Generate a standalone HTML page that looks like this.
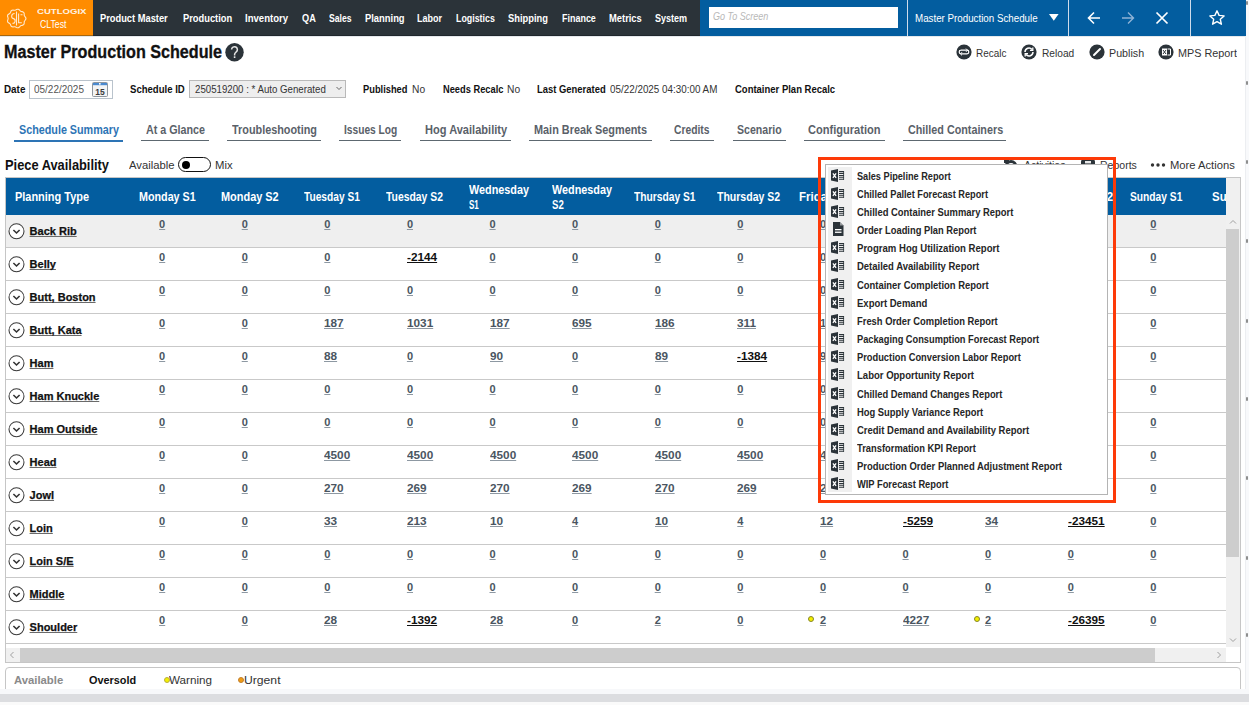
<!DOCTYPE html>
<html><head><meta charset="utf-8"><style>
html,body{margin:0;padding:0;}
body{width:1249px;height:705px;position:relative;overflow:hidden;background:#fff;font-family:"Liberation Sans",sans-serif;}
.t{position:absolute;white-space:nowrap;line-height:1;}
.a{position:absolute;}
.clip .t{text-underline-offset:1px;text-decoration-skip-ink:none;}
.n{text-decoration-color:#8d98a2 !important;}
</style></head><body>
<div class="a" style="left:0px;top:0px;width:1249px;height:36px;background:#2b3339;"></div>
<div class="a" style="left:0px;top:0px;width:93px;height:35px;background:#ff8c00;"></div>
<div class="a" style="left:0px;top:35px;width:93px;height:1px;background:#a8670f;"></div>
<div class="a" style="left:93px;top:35px;width:607px;height:1px;background:#1f262c;"></div>
<div class="a" style="left:0px;top:36px;width:1246px;height:1px;background:#e4e8ec;"></div>
<svg class="a" style="left:6px;top:8px" width="21" height="21" viewBox="0 0 21 21"><g fill="none" stroke="#ffe9cf" stroke-width="1.1"><path d="M19.95 10.50 L19.70 11.41 L19.12 12.22 L18.55 12.94 L18.25 13.71 L18.21 14.62 L18.15 15.61 L17.80 16.49 L17.07 17.07 L16.11 17.34 L15.19 17.52 L14.45 17.88 L13.83 18.53 L13.16 19.26 L12.34 19.76 L11.41 19.78 L10.50 19.40 L9.67 18.93 L8.87 18.70 L7.99 18.77 L7.01 18.92 L6.06 18.81 L5.30 18.28 L4.82 17.42 L4.48 16.52 L4.04 15.80 L3.35 15.27 L2.51 14.77 L1.81 14.10 L1.52 13.22 L1.67 12.26 L1.99 11.34 L2.15 10.50 L1.99 9.66 L1.67 8.74 L1.52 7.78 L1.81 6.90 L2.51 6.23 L3.35 5.73 L4.04 5.20 L4.48 4.48 L4.82 3.58 L5.30 2.72 L6.06 2.19 L7.01 2.08 L7.99 2.23 L8.87 2.30 L9.67 2.07 L10.50 1.60 L11.41 1.22 L12.34 1.24 L13.16 1.74 L13.83 2.47 L14.45 3.12 L15.19 3.48 L16.11 3.66 L17.07 3.93 L17.80 4.51 L18.15 5.39 L18.21 6.38 L18.25 7.29 L18.55 8.06 L19.12 8.78 L19.70 9.59 L19.95 10.50z"/><path d="M10.5 3.5v14"/><path d="M8.6 5.5C5 5.5 4.8 10 7.5 10.6 10 11.2 9.6 15.6 6.5 15.4"/><path d="M12.6 5.5v9.2h3.2M14.5 6.8h2"/></g></svg>
<div class="t" style="left:37.00px;top:6.00px;font-size:9px;color:#fff4e6;font-weight:bold;transform:scaleX(1.0638) scaleY(0.75);transform-origin:0 100%;">CUTLOGIX</div>
<div class="t" style="left:39.70px;top:20.00px;font-size:10px;color:#fff;transform:scaleX(0.8710);transform-origin:0 0;">CLTest</div>
<div class="t" style="left:100.40px;top:13.00px;font-size:11px;color:#fff;font-weight:bold;transform:scaleX(0.8457);transform-origin:0 0;">Product Master</div>
<div class="t" style="left:182.60px;top:13.00px;font-size:11px;color:#fff;font-weight:bold;transform:scaleX(0.8466);transform-origin:0 0;">Production</div>
<div class="t" style="left:245.00px;top:13.00px;font-size:11px;color:#fff;font-weight:bold;transform:scaleX(0.8700);transform-origin:0 0;">Inventory</div>
<div class="t" style="left:301.50px;top:13.00px;font-size:11px;color:#fff;font-weight:bold;transform:scaleX(0.8353);transform-origin:0 0;">QA</div>
<div class="t" style="left:328.70px;top:13.00px;font-size:11px;color:#fff;font-weight:bold;transform:scaleX(0.7862);transform-origin:0 0;">Sales</div>
<div class="t" style="left:364.80px;top:13.00px;font-size:11px;color:#fff;font-weight:bold;transform:scaleX(0.8522);transform-origin:0 0;">Planning</div>
<div class="t" style="left:417.40px;top:13.00px;font-size:11px;color:#fff;font-weight:bold;transform:scaleX(0.8161);transform-origin:0 0;">Labor</div>
<div class="t" style="left:456.40px;top:13.00px;font-size:11px;color:#fff;font-weight:bold;transform:scaleX(0.8042);transform-origin:0 0;">Logistics</div>
<div class="t" style="left:507.90px;top:13.00px;font-size:11px;color:#fff;font-weight:bold;transform:scaleX(0.8489);transform-origin:0 0;">Shipping</div>
<div class="t" style="left:561.50px;top:13.00px;font-size:11px;color:#fff;font-weight:bold;transform:scaleX(0.8143);transform-origin:0 0;">Finance</div>
<div class="t" style="left:608.70px;top:13.00px;font-size:11px;color:#fff;font-weight:bold;transform:scaleX(0.8513);transform-origin:0 0;">Metrics</div>
<div class="t" style="left:655.00px;top:13.00px;font-size:11px;color:#fff;font-weight:bold;transform:scaleX(0.8205);transform-origin:0 0;">System</div>
<div class="a" style="left:700px;top:0px;width:546px;height:36px;background:#035d9f;"></div>
<div class="a" style="left:709px;top:7px;width:189px;height:21px;background:#fff;"></div>
<div class="t" style="left:713.00px;top:12.00px;font-size:10px;color:#b8b8b8;font-style:italic;transform:scaleX(0.9032);transform-origin:0 0;">Go To Screen</div>
<div class="a" style="left:907px;top:0px;width:1px;height:36px;background:#cfdceb;"></div>
<div class="a" style="left:1068px;top:0px;width:1px;height:36px;background:#cfdceb;"></div>
<div class="a" style="left:1190px;top:0px;width:1px;height:36px;background:#cfdceb;"></div>
<div class="t" style="left:915.00px;top:14.00px;font-size:10px;color:#fff;transform:scaleX(0.9762);transform-origin:0 0;">Master Production Schedule</div>
<svg class="a" style="left:1049px;top:14px" width="10" height="7"><path d="M0 0h9.6L4.8 6.8z" fill="#fff"/></svg>
<svg class="a" style="left:1086px;top:10px" width="16" height="16" viewBox="0 0 16 16"><path d="M14 8H2.5M8 2.5L2.5 8 8 13.5" fill="none" stroke="#fff" stroke-width="1.6"/></svg>
<svg class="a" style="left:1120px;top:10px" width="16" height="16" viewBox="0 0 16 16"><path d="M2 8h11.5M8 2.5L13.5 8 8 13.5" fill="none" stroke="#8fb3d6" stroke-width="1.4"/></svg>
<svg class="a" style="left:1154px;top:10px" width="16" height="16" viewBox="0 0 16 16"><path d="M2.5 2.5l11 11M13.5 2.5l-11 11" fill="none" stroke="#fff" stroke-width="1.7"/></svg>
<svg class="a" style="left:1208px;top:9px" width="18" height="18" viewBox="0 0 18 18"><path d="M9 1.8l2.1 4.6 5 .5-3.8 3.4 1.1 4.9L9 12.6l-4.4 2.6 1.1-4.9L1.9 6.9l5-.5z" fill="none" stroke="#fff" stroke-width="1.4" stroke-linejoin="round"/></svg>
<div class="a" style="left:1246px;top:0px;width:3px;height:705px;background:#f8f9fb;"></div>
<div class="a" style="left:1245px;top:36px;width:1px;height:669px;background:#eceef1;"></div>
<div class="t" style="left:4.00px;top:43.00px;font-size:18px;color:#111;font-weight:bold;transform:scaleX(0.8971);transform-origin:0 0;-webkit-text-stroke:0.3px #111;">Master Production Schedule</div>
<svg class="a" style="left:225px;top:43px" width="19" height="19" viewBox="0 0 19 19"><circle cx="9.5" cy="9.3" r="9.2" fill="#2b3339"/><path d="M6.6 6.6a2.9 2.9 0 1 1 4.5 2.4c-1 .7-1.5 1.3-1.5 2.5v.9" fill="none" stroke="#e6e6e6" stroke-width="1.5"/><rect x="8.8" y="13.3" width="1.6" height="1.7" fill="#e6e6e6"/></svg>
<svg class="a" style="left:956px;top:44px" width="16" height="16" viewBox="0 0 16 16"><circle cx="8" cy="8" r="7.6" fill="#2b3339"/><path d="M4.5 6.2h6.5a1.8 1.8 0 0 1 0 3.6H5a1.8 1.8 0 0 1 0-3.6" fill="none" stroke="#fff" stroke-width="1.2"/><path d="M10 4.6l1.6 1.6L10 7.8M6 8.2L4.4 9.8 6 11.4" fill="none" stroke="#fff" stroke-width="1"/></svg>
<div class="t" style="left:976.30px;top:48.00px;font-size:11px;color:#333;transform:scaleX(0.9029);transform-origin:0 0;">Recalc</div>
<svg class="a" style="left:1021px;top:44px" width="16" height="16" viewBox="0 0 16 16"><circle cx="8" cy="8" r="7.6" fill="#2b3339"/><path d="M4 8a4 4 0 0 1 7-2.6M12 8a4 4 0 0 1-7 2.6" fill="none" stroke="#fff" stroke-width="1.5"/><path d="M11.8 3.5v2.8H9M4.2 12.5V9.7H7" fill="none" stroke="#fff" stroke-width="1.3"/></svg>
<div class="t" style="left:1041.60px;top:48.00px;font-size:11px;color:#333;transform:scaleX(0.9257);transform-origin:0 0;">Reload</div>
<svg class="a" style="left:1089px;top:44px" width="16" height="16" viewBox="0 0 16 16"><circle cx="8" cy="8" r="7.6" fill="#2b3339"/><path d="M5 11l6-6" stroke="#fff" stroke-width="2" stroke-linecap="round"/></svg>
<div class="t" style="left:1109.00px;top:48.00px;font-size:11px;color:#333;transform:scaleX(0.9722);transform-origin:0 0;">Publish</div>
<svg class="a" style="left:1158px;top:44px" width="16" height="16" viewBox="0 0 16 16"><circle cx="8" cy="8" r="7.6" fill="#2b3339"/><rect x="4" y="4.5" width="5" height="7" fill="#fff"/><path d="M9.5 5h3v6h-3" fill="none" stroke="#fff" stroke-width="1"/><path d="M5 6l3 4M8 6l-3 4" stroke="#2b3339" stroke-width="1"/></svg>
<div class="t" style="left:1178.00px;top:48.00px;font-size:11px;color:#333;transform:scaleX(0.9833);transform-origin:0 0;">MPS Report</div>
<div class="t" style="left:3.50px;top:84.00px;font-size:11px;color:#111;font-weight:bold;transform:scaleX(0.8958);transform-origin:0 0;">Date</div>
<div class="a" style="left:29px;top:80px;width:84px;height:19px;border:1px solid #b9c3cc;box-sizing:border-box;background:#fff;"></div>
<div class="t" style="left:33.70px;top:84.00px;font-size:11px;color:#555;transform:scaleX(0.9073);transform-origin:0 0;">05/22/2025</div>
<svg class="a" style="left:92px;top:82px" width="16" height="15" viewBox="0 0 16 15"><rect x="0.5" y="0.5" width="15" height="14" rx="1" fill="#f3f4f5" stroke="#8f979e"/><rect x="1" y="1" width="14" height="2.2" fill="#4a8ad0"/><rect x="7" y="1" width="1.6" height="1.6" fill="#fff"/><text x="8" y="12.6" font-family="Liberation Sans" font-weight="bold" font-size="8.5" text-anchor="middle" fill="#3a3a3a">15</text></svg>
<div class="t" style="left:129.70px;top:84.00px;font-size:11px;color:#111;font-weight:bold;transform:scaleX(0.8698);transform-origin:0 0;">Schedule ID</div>
<div class="a" style="left:189px;top:80px;width:157px;height:18px;border:1px solid #b9b9b9;box-sizing:border-box;background:#eeeeee;"></div>
<div class="t" style="left:194.60px;top:84.00px;font-size:11px;color:#333;transform:scaleX(0.8799);transform-origin:0 0;">250519200 : * Auto Generated</div>
<svg class="a" style="left:336px;top:86px" width="6" height="5"><path d="M0.5 1l2.5 2.5L5.5 1" fill="none" stroke="#666" stroke-width="1"/></svg>
<div class="t" style="left:363.20px;top:84.00px;font-size:11px;color:#111;font-weight:bold;transform:scaleX(0.8453);transform-origin:0 0;">Published</div>
<div class="t" style="left:412.00px;top:84.00px;font-size:11px;color:#333;transform:scaleX(0.9286);transform-origin:0 0;">No</div>
<div class="t" style="left:442.90px;top:84.00px;font-size:11px;color:#111;font-weight:bold;transform:scaleX(0.8444);transform-origin:0 0;">Needs Recalc</div>
<div class="t" style="left:507.00px;top:84.00px;font-size:11px;color:#333;transform:scaleX(0.9286);transform-origin:0 0;">No</div>
<div class="t" style="left:537.40px;top:84.00px;font-size:11px;color:#111;font-weight:bold;transform:scaleX(0.8575);transform-origin:0 0;">Last Generated</div>
<div class="t" style="left:610.00px;top:84.00px;font-size:11px;color:#333;transform:scaleX(0.8958);transform-origin:0 0;">05/22/2025 04:30:00 AM</div>
<div class="t" style="left:735.00px;top:84.00px;font-size:11px;color:#111;font-weight:bold;transform:scaleX(0.8621);transform-origin:0 0;">Container Plan Recalc</div>
<div class="t" style="left:18.50px;top:124.00px;font-size:12px;color:#2d74b5;font-weight:bold;transform:scaleX(0.8973);transform-origin:0 0;">Schedule Summary</div>
<div class="a" style="left:14px;top:140px;width:109px;height:2px;background:#2d74b5;"></div>
<div class="t" style="left:146.00px;top:124.00px;font-size:12px;color:#5a6169;font-weight:bold;transform:scaleX(0.8939);transform-origin:0 0;">At a Glance</div>
<div class="a" style="left:141px;top:140px;width:68px;height:1px;background:#5d6870;"></div>
<div class="t" style="left:232.00px;top:124.00px;font-size:12px;color:#5a6169;font-weight:bold;transform:scaleX(0.9043);transform-origin:0 0;">Troubleshooting</div>
<div class="a" style="left:227px;top:140px;width:94px;height:1px;background:#5d6870;"></div>
<div class="t" style="left:344.00px;top:124.00px;font-size:12px;color:#5a6169;font-weight:bold;transform:scaleX(0.8492);transform-origin:0 0;">Issues Log</div>
<div class="a" style="left:339px;top:140px;width:62px;height:1px;background:#5d6870;"></div>
<div class="t" style="left:424.70px;top:124.00px;font-size:12px;color:#5a6169;font-weight:bold;transform:scaleX(0.9213);transform-origin:0 0;">Hog Availability</div>
<div class="a" style="left:420px;top:140px;width:91px;height:1px;background:#5d6870;"></div>
<div class="t" style="left:534.00px;top:124.00px;font-size:12px;color:#5a6169;font-weight:bold;transform:scaleX(0.9064);transform-origin:0 0;">Main Break Segments</div>
<div class="a" style="left:529px;top:140px;width:123px;height:1px;background:#5d6870;"></div>
<div class="t" style="left:674.00px;top:124.00px;font-size:12px;color:#5a6169;font-weight:bold;transform:scaleX(0.8571);transform-origin:0 0;">Credits</div>
<div class="a" style="left:670px;top:140px;width:44px;height:1px;background:#5d6870;"></div>
<div class="t" style="left:736.80px;top:124.00px;font-size:12px;color:#5a6169;font-weight:bold;transform:scaleX(0.8804);transform-origin:0 0;">Scenario</div>
<div class="a" style="left:733px;top:140px;width:53px;height:1px;background:#5d6870;"></div>
<div class="t" style="left:808.20px;top:124.00px;font-size:12px;color:#5a6169;font-weight:bold;transform:scaleX(0.9215);transform-origin:0 0;">Configuration</div>
<div class="a" style="left:804px;top:140px;width:81px;height:1px;background:#5d6870;"></div>
<div class="t" style="left:907.50px;top:124.00px;font-size:12px;color:#5a6169;font-weight:bold;transform:scaleX(0.8972);transform-origin:0 0;">Chilled Containers</div>
<div class="a" style="left:903px;top:140px;width:103px;height:1px;background:#5d6870;"></div>
<div class="t" style="left:5.40px;top:158.00px;font-size:14px;color:#111;font-weight:bold;transform:scaleX(0.9175);transform-origin:0 0;">Piece Availability</div>
<div class="t" style="left:129.00px;top:160.00px;font-size:11px;color:#333;transform:scaleX(1.0227);transform-origin:0 0;">Available</div>
<div class="a" style="left:178px;top:157px;width:33px;height:15px;border:1.5px solid #111;border-radius:8px;box-sizing:border-box"></div>
<div class="a" style="left:181.5px;top:160.5px;width:8px;height:8px;border-radius:50%;background:#000"></div>
<div class="t" style="left:215.00px;top:160.00px;font-size:11px;color:#333;transform:scaleX(1.0278);transform-origin:0 0;">Mix</div>
<svg class="a" style="left:1003px;top:159px" width="16" height="14"><circle cx="8" cy="7.5" r="6.5" fill="#2b3339"/><circle cx="8" cy="7.5" r="3" fill="none" stroke="#fff" stroke-width="1.2"/><rect x="1" y="0" width="5" height="4" fill="#2b3339"/></svg>
<div class="t" style="left:1024.00px;top:160.00px;font-size:11px;color:#333;transform:scaleX(0.9545);transform-origin:0 0;">Activities</div>
<svg class="a" style="left:1081px;top:159px" width="15" height="13"><rect x="0" y="0" width="14" height="12" rx="3" fill="#2b3339"/><rect x="4" y="2" width="6" height="2.4" fill="#e8e8e8"/></svg>
<div class="t" style="left:1099.50px;top:160.00px;font-size:11px;color:#333;transform:scaleX(0.9564);transform-origin:0 0;">Reports</div>
<svg class="a" style="left:1150px;top:162px" width="16" height="6"><circle cx="2.5" cy="3" r="1.7" fill="#333"/><circle cx="8" cy="3" r="1.7" fill="#333"/><circle cx="13.5" cy="3" r="1.7" fill="#333"/></svg>
<div class="t" style="left:1170.00px;top:160.00px;font-size:11px;color:#333;transform:scaleX(1.0188);transform-origin:0 0;">More Actions</div>
<div class="a" style="left:5px;top:177px;width:1236px;height:486px;border:1px solid #c6c6c6;box-sizing:border-box;background:#fff;"></div>
<div class="a" style="left:6px;top:178px;width:1220px;height:37px;background:#035d9f;"></div>
<div class="t" style="left:14.60px;top:191.00px;font-size:12px;color:#fff;font-weight:bold;transform:scaleX(0.9123);transform-origin:0 0;">Planning Type</div>
<div style="position:absolute;left:0;top:0;width:1226px;height:705px;overflow:hidden">
<div class="t" style="left:138.60px;top:191.00px;font-size:12px;color:#fff;font-weight:bold;transform:scaleX(0.8953);transform-origin:0 0;">Monday S1</div>
<div class="t" style="left:221.20px;top:191.00px;font-size:12px;color:#fff;font-weight:bold;transform:scaleX(0.9109);transform-origin:0 0;">Monday S2</div>
<div class="t" style="left:303.80px;top:191.00px;font-size:12px;color:#fff;font-weight:bold;transform:scaleX(0.8485);transform-origin:0 0;">Tuesday S1</div>
<div class="t" style="left:386.40px;top:191.00px;font-size:12px;color:#fff;font-weight:bold;transform:scaleX(0.8652);transform-origin:0 0;">Tuesday S2</div>
<div class="t" style="left:469.00px;top:184.00px;font-size:12px;color:#fff;font-weight:bold;transform:scaleX(0.9015);transform-origin:0 0;">Wednesday</div>
<div class="t" style="left:469.00px;top:199.00px;font-size:12px;color:#fff;font-weight:bold;transform:scaleX(0.6667);transform-origin:0 0;">S1</div>
<div class="t" style="left:551.60px;top:184.00px;font-size:12px;color:#fff;font-weight:bold;transform:scaleX(0.9015);transform-origin:0 0;">Wednesday</div>
<div class="t" style="left:551.60px;top:199.00px;font-size:12px;color:#fff;font-weight:bold;transform:scaleX(0.8000);transform-origin:0 0;">S2</div>
<div class="t" style="left:634.20px;top:191.00px;font-size:12px;color:#fff;font-weight:bold;transform:scaleX(0.8542);transform-origin:0 0;">Thursday S1</div>
<div class="t" style="left:716.80px;top:191.00px;font-size:12px;color:#fff;font-weight:bold;transform:scaleX(0.8764);transform-origin:0 0;">Thursday S2</div>
<div class="t" style="left:799.40px;top:191.00px;font-size:12px;color:#fff;font-weight:bold;transform:scaleX(0.9550);transform-origin:0 0;">Friday S1</div>
<div class="t" style="left:882.00px;top:191.00px;font-size:12px;color:#fff;font-weight:bold;transform:scaleX(0.9550);transform-origin:0 0;">Friday S2</div>
<div class="t" style="left:964.60px;top:191.00px;font-size:12px;color:#fff;font-weight:bold;transform:scaleX(0.9550);transform-origin:0 0;">Saturday S1</div>
<div class="t" style="left:1047.20px;top:191.00px;font-size:12px;color:#fff;font-weight:bold;transform:scaleX(0.9550);transform-origin:0 0;">Saturday S2</div>
<div class="t" style="left:1129.80px;top:191.00px;font-size:12px;color:#fff;font-weight:bold;transform:scaleX(0.8532);transform-origin:0 0;">Sunday S1</div>
<div class="t" style="left:1212.40px;top:191.00px;font-size:12px;color:#fff;font-weight:bold;transform:scaleX(0.9550);transform-origin:0 0;">Sunday S2</div>
</div>
<div class="clip" style="position:absolute;left:6px;top:215px;width:1220px;height:432px;overflow:hidden">
<div class="a" style="left:0px;top:0px;width:1220px;height:32px;background:#efefef;"></div>
<div class="a" style="left:0px;top:32px;width:1220px;height:1px;background:#c9c9c9;"></div>
<svg class="a" style="left:2px;top:8px" width="17" height="17" viewBox="0 0 17 17"><circle cx="8.5" cy="8.3" r="7.5" fill="#fff" stroke="#3a3a3a" stroke-width="1.05"/><path d="M5.4 7l3.1 3 3.1-3" fill="none" stroke="#333" stroke-width="1.6"/></svg>
<div class="t" style="left:23.60px;top:11.00px;font-size:11px;color:#111;font-weight:bold;text-decoration:underline;text-decoration-color:#6a6a6a;-webkit-text-stroke:0.25px #111;">Back Rib</div>
<div class="t" style="left:153.10px;top:4.00px;font-size:11px;color:#4a5561;font-weight:bold;text-decoration:underline;text-decoration-color:#8d98a2;">0</div>
<div class="t" style="left:235.70px;top:4.00px;font-size:11px;color:#4a5561;font-weight:bold;text-decoration:underline;text-decoration-color:#8d98a2;">0</div>
<div class="t" style="left:318.30px;top:4.00px;font-size:11px;color:#4a5561;font-weight:bold;text-decoration:underline;text-decoration-color:#8d98a2;">0</div>
<div class="t" style="left:400.90px;top:4.00px;font-size:11px;color:#4a5561;font-weight:bold;text-decoration:underline;text-decoration-color:#8d98a2;">0</div>
<div class="t" style="left:483.50px;top:4.00px;font-size:11px;color:#4a5561;font-weight:bold;text-decoration:underline;text-decoration-color:#8d98a2;">0</div>
<div class="t" style="left:566.10px;top:4.00px;font-size:11px;color:#4a5561;font-weight:bold;text-decoration:underline;text-decoration-color:#8d98a2;">0</div>
<div class="t" style="left:648.70px;top:4.00px;font-size:11px;color:#4a5561;font-weight:bold;text-decoration:underline;text-decoration-color:#8d98a2;">0</div>
<div class="t" style="left:731.30px;top:4.00px;font-size:11px;color:#4a5561;font-weight:bold;text-decoration:underline;text-decoration-color:#8d98a2;">0</div>
<div class="t" style="left:813.90px;top:4.00px;font-size:11px;color:#4a5561;font-weight:bold;text-decoration:underline;text-decoration-color:#8d98a2;">0</div>
<div class="t" style="left:896.50px;top:4.00px;font-size:11px;color:#4a5561;font-weight:bold;text-decoration:underline;text-decoration-color:#8d98a2;">0</div>
<div class="t" style="left:979.10px;top:4.00px;font-size:11px;color:#4a5561;font-weight:bold;text-decoration:underline;text-decoration-color:#8d98a2;">0</div>
<div class="t" style="left:1061.70px;top:4.00px;font-size:11px;color:#4a5561;font-weight:bold;text-decoration:underline;text-decoration-color:#8d98a2;">0</div>
<div class="t" style="left:1144.30px;top:4.00px;font-size:11px;color:#4a5561;font-weight:bold;text-decoration:underline;text-decoration-color:#8d98a2;">0</div>
<div class="a" style="left:0px;top:65px;width:1220px;height:1px;background:#c9c9c9;"></div>
<svg class="a" style="left:2px;top:41px" width="17" height="17" viewBox="0 0 17 17"><circle cx="8.5" cy="8.3" r="7.5" fill="#fff" stroke="#3a3a3a" stroke-width="1.05"/><path d="M5.4 7l3.1 3 3.1-3" fill="none" stroke="#333" stroke-width="1.6"/></svg>
<div class="t" style="left:23.60px;top:44.00px;font-size:11px;color:#111;font-weight:bold;text-decoration:underline;text-decoration-color:#6a6a6a;-webkit-text-stroke:0.25px #111;">Belly</div>
<div class="t" style="left:153.10px;top:37.00px;font-size:11px;color:#4a5561;font-weight:bold;text-decoration:underline;text-decoration-color:#8d98a2;">0</div>
<div class="t" style="left:235.70px;top:37.00px;font-size:11px;color:#4a5561;font-weight:bold;text-decoration:underline;text-decoration-color:#8d98a2;">0</div>
<div class="t" style="left:318.30px;top:37.00px;font-size:11px;color:#4a5561;font-weight:bold;text-decoration:underline;text-decoration-color:#8d98a2;">0</div>
<div class="t" style="left:400.90px;top:37.00px;font-size:11px;color:#111;font-weight:bold;transform:scaleX(1.0700);transform-origin:0 0;text-decoration:underline;">-2144</div>
<div class="t" style="left:483.50px;top:37.00px;font-size:11px;color:#4a5561;font-weight:bold;text-decoration:underline;text-decoration-color:#8d98a2;">0</div>
<div class="t" style="left:566.10px;top:37.00px;font-size:11px;color:#4a5561;font-weight:bold;text-decoration:underline;text-decoration-color:#8d98a2;">0</div>
<div class="t" style="left:648.70px;top:37.00px;font-size:11px;color:#4a5561;font-weight:bold;text-decoration:underline;text-decoration-color:#8d98a2;">0</div>
<div class="t" style="left:731.30px;top:37.00px;font-size:11px;color:#4a5561;font-weight:bold;text-decoration:underline;text-decoration-color:#8d98a2;">0</div>
<div class="t" style="left:813.90px;top:37.00px;font-size:11px;color:#4a5561;font-weight:bold;text-decoration:underline;text-decoration-color:#8d98a2;">0</div>
<div class="t" style="left:896.50px;top:37.00px;font-size:11px;color:#4a5561;font-weight:bold;text-decoration:underline;text-decoration-color:#8d98a2;">0</div>
<div class="t" style="left:979.10px;top:37.00px;font-size:11px;color:#4a5561;font-weight:bold;text-decoration:underline;text-decoration-color:#8d98a2;">0</div>
<div class="t" style="left:1061.70px;top:37.00px;font-size:11px;color:#4a5561;font-weight:bold;text-decoration:underline;text-decoration-color:#8d98a2;">0</div>
<div class="t" style="left:1144.30px;top:37.00px;font-size:11px;color:#4a5561;font-weight:bold;text-decoration:underline;text-decoration-color:#8d98a2;">0</div>
<div class="a" style="left:0px;top:98px;width:1220px;height:1px;background:#c9c9c9;"></div>
<svg class="a" style="left:2px;top:74px" width="17" height="17" viewBox="0 0 17 17"><circle cx="8.5" cy="8.3" r="7.5" fill="#fff" stroke="#3a3a3a" stroke-width="1.05"/><path d="M5.4 7l3.1 3 3.1-3" fill="none" stroke="#333" stroke-width="1.6"/></svg>
<div class="t" style="left:23.60px;top:77.00px;font-size:11px;color:#111;font-weight:bold;text-decoration:underline;text-decoration-color:#6a6a6a;-webkit-text-stroke:0.25px #111;">Butt, Boston</div>
<div class="t" style="left:153.10px;top:70.00px;font-size:11px;color:#4a5561;font-weight:bold;text-decoration:underline;text-decoration-color:#8d98a2;">0</div>
<div class="t" style="left:235.70px;top:70.00px;font-size:11px;color:#4a5561;font-weight:bold;text-decoration:underline;text-decoration-color:#8d98a2;">0</div>
<div class="t" style="left:318.30px;top:70.00px;font-size:11px;color:#4a5561;font-weight:bold;text-decoration:underline;text-decoration-color:#8d98a2;">0</div>
<div class="t" style="left:400.90px;top:70.00px;font-size:11px;color:#4a5561;font-weight:bold;text-decoration:underline;text-decoration-color:#8d98a2;">0</div>
<div class="t" style="left:483.50px;top:70.00px;font-size:11px;color:#4a5561;font-weight:bold;text-decoration:underline;text-decoration-color:#8d98a2;">0</div>
<div class="t" style="left:566.10px;top:70.00px;font-size:11px;color:#4a5561;font-weight:bold;text-decoration:underline;text-decoration-color:#8d98a2;">0</div>
<div class="t" style="left:648.70px;top:70.00px;font-size:11px;color:#4a5561;font-weight:bold;text-decoration:underline;text-decoration-color:#8d98a2;">0</div>
<div class="t" style="left:731.30px;top:70.00px;font-size:11px;color:#4a5561;font-weight:bold;text-decoration:underline;text-decoration-color:#8d98a2;">0</div>
<div class="t" style="left:813.90px;top:70.00px;font-size:11px;color:#4a5561;font-weight:bold;text-decoration:underline;text-decoration-color:#8d98a2;">0</div>
<div class="t" style="left:896.50px;top:70.00px;font-size:11px;color:#4a5561;font-weight:bold;text-decoration:underline;text-decoration-color:#8d98a2;">0</div>
<div class="t" style="left:979.10px;top:70.00px;font-size:11px;color:#4a5561;font-weight:bold;text-decoration:underline;text-decoration-color:#8d98a2;">0</div>
<div class="t" style="left:1061.70px;top:70.00px;font-size:11px;color:#4a5561;font-weight:bold;text-decoration:underline;text-decoration-color:#8d98a2;">0</div>
<div class="t" style="left:1144.30px;top:70.00px;font-size:11px;color:#4a5561;font-weight:bold;text-decoration:underline;text-decoration-color:#8d98a2;">0</div>
<div class="a" style="left:0px;top:131px;width:1220px;height:1px;background:#c9c9c9;"></div>
<svg class="a" style="left:2px;top:107px" width="17" height="17" viewBox="0 0 17 17"><circle cx="8.5" cy="8.3" r="7.5" fill="#fff" stroke="#3a3a3a" stroke-width="1.05"/><path d="M5.4 7l3.1 3 3.1-3" fill="none" stroke="#333" stroke-width="1.6"/></svg>
<div class="t" style="left:23.60px;top:110.00px;font-size:11px;color:#111;font-weight:bold;text-decoration:underline;text-decoration-color:#6a6a6a;-webkit-text-stroke:0.25px #111;">Butt, Kata</div>
<div class="t" style="left:153.10px;top:103.00px;font-size:11px;color:#4a5561;font-weight:bold;text-decoration:underline;text-decoration-color:#8d98a2;">0</div>
<div class="t" style="left:235.70px;top:103.00px;font-size:11px;color:#4a5561;font-weight:bold;text-decoration:underline;text-decoration-color:#8d98a2;">0</div>
<div class="t" style="left:318.30px;top:103.00px;font-size:11px;color:#4a5561;font-weight:bold;transform:scaleX(1.0700);transform-origin:0 0;text-decoration:underline;text-decoration-color:#8d98a2;">187</div>
<div class="t" style="left:400.90px;top:103.00px;font-size:11px;color:#4a5561;font-weight:bold;transform:scaleX(1.0700);transform-origin:0 0;text-decoration:underline;text-decoration-color:#8d98a2;">1031</div>
<div class="t" style="left:483.50px;top:103.00px;font-size:11px;color:#4a5561;font-weight:bold;transform:scaleX(1.0700);transform-origin:0 0;text-decoration:underline;text-decoration-color:#8d98a2;">187</div>
<div class="t" style="left:566.10px;top:103.00px;font-size:11px;color:#4a5561;font-weight:bold;transform:scaleX(1.0700);transform-origin:0 0;text-decoration:underline;text-decoration-color:#8d98a2;">695</div>
<div class="t" style="left:648.70px;top:103.00px;font-size:11px;color:#4a5561;font-weight:bold;transform:scaleX(1.0700);transform-origin:0 0;text-decoration:underline;text-decoration-color:#8d98a2;">186</div>
<div class="t" style="left:731.30px;top:103.00px;font-size:11px;color:#4a5561;font-weight:bold;transform:scaleX(1.0700);transform-origin:0 0;text-decoration:underline;text-decoration-color:#8d98a2;">311</div>
<div class="t" style="left:813.90px;top:103.00px;font-size:11px;color:#4a5561;font-weight:bold;text-decoration:underline;text-decoration-color:#8d98a2;">1</div>
<div class="t" style="left:896.50px;top:103.00px;font-size:11px;color:#4a5561;font-weight:bold;text-decoration:underline;text-decoration-color:#8d98a2;">0</div>
<div class="t" style="left:979.10px;top:103.00px;font-size:11px;color:#4a5561;font-weight:bold;text-decoration:underline;text-decoration-color:#8d98a2;">0</div>
<div class="t" style="left:1061.70px;top:103.00px;font-size:11px;color:#4a5561;font-weight:bold;text-decoration:underline;text-decoration-color:#8d98a2;">0</div>
<div class="t" style="left:1144.30px;top:103.00px;font-size:11px;color:#4a5561;font-weight:bold;text-decoration:underline;text-decoration-color:#8d98a2;">0</div>
<div class="a" style="left:0px;top:164px;width:1220px;height:1px;background:#c9c9c9;"></div>
<svg class="a" style="left:2px;top:140px" width="17" height="17" viewBox="0 0 17 17"><circle cx="8.5" cy="8.3" r="7.5" fill="#fff" stroke="#3a3a3a" stroke-width="1.05"/><path d="M5.4 7l3.1 3 3.1-3" fill="none" stroke="#333" stroke-width="1.6"/></svg>
<div class="t" style="left:23.60px;top:143.00px;font-size:11px;color:#111;font-weight:bold;text-decoration:underline;text-decoration-color:#6a6a6a;-webkit-text-stroke:0.25px #111;">Ham</div>
<div class="t" style="left:153.10px;top:136.00px;font-size:11px;color:#4a5561;font-weight:bold;text-decoration:underline;text-decoration-color:#8d98a2;">0</div>
<div class="t" style="left:235.70px;top:136.00px;font-size:11px;color:#4a5561;font-weight:bold;text-decoration:underline;text-decoration-color:#8d98a2;">0</div>
<div class="t" style="left:318.30px;top:136.00px;font-size:11px;color:#4a5561;font-weight:bold;transform:scaleX(1.0700);transform-origin:0 0;text-decoration:underline;text-decoration-color:#8d98a2;">88</div>
<div class="t" style="left:400.90px;top:136.00px;font-size:11px;color:#4a5561;font-weight:bold;text-decoration:underline;text-decoration-color:#8d98a2;">0</div>
<div class="t" style="left:483.50px;top:136.00px;font-size:11px;color:#4a5561;font-weight:bold;transform:scaleX(1.0700);transform-origin:0 0;text-decoration:underline;text-decoration-color:#8d98a2;">90</div>
<div class="t" style="left:566.10px;top:136.00px;font-size:11px;color:#4a5561;font-weight:bold;text-decoration:underline;text-decoration-color:#8d98a2;">0</div>
<div class="t" style="left:648.70px;top:136.00px;font-size:11px;color:#4a5561;font-weight:bold;transform:scaleX(1.0700);transform-origin:0 0;text-decoration:underline;text-decoration-color:#8d98a2;">89</div>
<div class="t" style="left:731.30px;top:136.00px;font-size:11px;color:#111;font-weight:bold;transform:scaleX(1.0700);transform-origin:0 0;text-decoration:underline;">-1384</div>
<div class="t" style="left:813.90px;top:136.00px;font-size:11px;color:#4a5561;font-weight:bold;text-decoration:underline;text-decoration-color:#8d98a2;">9</div>
<div class="t" style="left:896.50px;top:136.00px;font-size:11px;color:#4a5561;font-weight:bold;text-decoration:underline;text-decoration-color:#8d98a2;">0</div>
<div class="t" style="left:979.10px;top:136.00px;font-size:11px;color:#4a5561;font-weight:bold;text-decoration:underline;text-decoration-color:#8d98a2;">0</div>
<div class="t" style="left:1061.70px;top:136.00px;font-size:11px;color:#4a5561;font-weight:bold;text-decoration:underline;text-decoration-color:#8d98a2;">0</div>
<div class="t" style="left:1144.30px;top:136.00px;font-size:11px;color:#4a5561;font-weight:bold;text-decoration:underline;text-decoration-color:#8d98a2;">0</div>
<div class="a" style="left:0px;top:197px;width:1220px;height:1px;background:#c9c9c9;"></div>
<svg class="a" style="left:2px;top:173px" width="17" height="17" viewBox="0 0 17 17"><circle cx="8.5" cy="8.3" r="7.5" fill="#fff" stroke="#3a3a3a" stroke-width="1.05"/><path d="M5.4 7l3.1 3 3.1-3" fill="none" stroke="#333" stroke-width="1.6"/></svg>
<div class="t" style="left:23.60px;top:176.00px;font-size:11px;color:#111;font-weight:bold;text-decoration:underline;text-decoration-color:#6a6a6a;-webkit-text-stroke:0.25px #111;">Ham Knuckle</div>
<div class="t" style="left:153.10px;top:169.00px;font-size:11px;color:#4a5561;font-weight:bold;text-decoration:underline;text-decoration-color:#8d98a2;">0</div>
<div class="t" style="left:235.70px;top:169.00px;font-size:11px;color:#4a5561;font-weight:bold;text-decoration:underline;text-decoration-color:#8d98a2;">0</div>
<div class="t" style="left:318.30px;top:169.00px;font-size:11px;color:#4a5561;font-weight:bold;text-decoration:underline;text-decoration-color:#8d98a2;">0</div>
<div class="t" style="left:400.90px;top:169.00px;font-size:11px;color:#4a5561;font-weight:bold;text-decoration:underline;text-decoration-color:#8d98a2;">0</div>
<div class="t" style="left:483.50px;top:169.00px;font-size:11px;color:#4a5561;font-weight:bold;text-decoration:underline;text-decoration-color:#8d98a2;">0</div>
<div class="t" style="left:566.10px;top:169.00px;font-size:11px;color:#4a5561;font-weight:bold;text-decoration:underline;text-decoration-color:#8d98a2;">0</div>
<div class="t" style="left:648.70px;top:169.00px;font-size:11px;color:#4a5561;font-weight:bold;text-decoration:underline;text-decoration-color:#8d98a2;">0</div>
<div class="t" style="left:731.30px;top:169.00px;font-size:11px;color:#4a5561;font-weight:bold;text-decoration:underline;text-decoration-color:#8d98a2;">0</div>
<div class="t" style="left:813.90px;top:169.00px;font-size:11px;color:#4a5561;font-weight:bold;text-decoration:underline;text-decoration-color:#8d98a2;">0</div>
<div class="t" style="left:896.50px;top:169.00px;font-size:11px;color:#4a5561;font-weight:bold;text-decoration:underline;text-decoration-color:#8d98a2;">0</div>
<div class="t" style="left:979.10px;top:169.00px;font-size:11px;color:#4a5561;font-weight:bold;text-decoration:underline;text-decoration-color:#8d98a2;">0</div>
<div class="t" style="left:1061.70px;top:169.00px;font-size:11px;color:#4a5561;font-weight:bold;text-decoration:underline;text-decoration-color:#8d98a2;">0</div>
<div class="t" style="left:1144.30px;top:169.00px;font-size:11px;color:#4a5561;font-weight:bold;text-decoration:underline;text-decoration-color:#8d98a2;">0</div>
<div class="a" style="left:0px;top:230px;width:1220px;height:1px;background:#c9c9c9;"></div>
<svg class="a" style="left:2px;top:206px" width="17" height="17" viewBox="0 0 17 17"><circle cx="8.5" cy="8.3" r="7.5" fill="#fff" stroke="#3a3a3a" stroke-width="1.05"/><path d="M5.4 7l3.1 3 3.1-3" fill="none" stroke="#333" stroke-width="1.6"/></svg>
<div class="t" style="left:23.60px;top:209.00px;font-size:11px;color:#111;font-weight:bold;text-decoration:underline;text-decoration-color:#6a6a6a;-webkit-text-stroke:0.25px #111;">Ham Outside</div>
<div class="t" style="left:153.10px;top:202.00px;font-size:11px;color:#4a5561;font-weight:bold;text-decoration:underline;text-decoration-color:#8d98a2;">0</div>
<div class="t" style="left:235.70px;top:202.00px;font-size:11px;color:#4a5561;font-weight:bold;text-decoration:underline;text-decoration-color:#8d98a2;">0</div>
<div class="t" style="left:318.30px;top:202.00px;font-size:11px;color:#4a5561;font-weight:bold;text-decoration:underline;text-decoration-color:#8d98a2;">0</div>
<div class="t" style="left:400.90px;top:202.00px;font-size:11px;color:#4a5561;font-weight:bold;text-decoration:underline;text-decoration-color:#8d98a2;">0</div>
<div class="t" style="left:483.50px;top:202.00px;font-size:11px;color:#4a5561;font-weight:bold;text-decoration:underline;text-decoration-color:#8d98a2;">0</div>
<div class="t" style="left:566.10px;top:202.00px;font-size:11px;color:#4a5561;font-weight:bold;text-decoration:underline;text-decoration-color:#8d98a2;">0</div>
<div class="t" style="left:648.70px;top:202.00px;font-size:11px;color:#4a5561;font-weight:bold;text-decoration:underline;text-decoration-color:#8d98a2;">0</div>
<div class="t" style="left:731.30px;top:202.00px;font-size:11px;color:#4a5561;font-weight:bold;text-decoration:underline;text-decoration-color:#8d98a2;">0</div>
<div class="t" style="left:813.90px;top:202.00px;font-size:11px;color:#4a5561;font-weight:bold;text-decoration:underline;text-decoration-color:#8d98a2;">0</div>
<div class="t" style="left:896.50px;top:202.00px;font-size:11px;color:#4a5561;font-weight:bold;text-decoration:underline;text-decoration-color:#8d98a2;">0</div>
<div class="t" style="left:979.10px;top:202.00px;font-size:11px;color:#4a5561;font-weight:bold;text-decoration:underline;text-decoration-color:#8d98a2;">0</div>
<div class="t" style="left:1061.70px;top:202.00px;font-size:11px;color:#4a5561;font-weight:bold;text-decoration:underline;text-decoration-color:#8d98a2;">0</div>
<div class="t" style="left:1144.30px;top:202.00px;font-size:11px;color:#4a5561;font-weight:bold;text-decoration:underline;text-decoration-color:#8d98a2;">0</div>
<div class="a" style="left:0px;top:263px;width:1220px;height:1px;background:#c9c9c9;"></div>
<svg class="a" style="left:2px;top:239px" width="17" height="17" viewBox="0 0 17 17"><circle cx="8.5" cy="8.3" r="7.5" fill="#fff" stroke="#3a3a3a" stroke-width="1.05"/><path d="M5.4 7l3.1 3 3.1-3" fill="none" stroke="#333" stroke-width="1.6"/></svg>
<div class="t" style="left:23.60px;top:242.00px;font-size:11px;color:#111;font-weight:bold;text-decoration:underline;text-decoration-color:#6a6a6a;-webkit-text-stroke:0.25px #111;">Head</div>
<div class="t" style="left:153.10px;top:235.00px;font-size:11px;color:#4a5561;font-weight:bold;text-decoration:underline;text-decoration-color:#8d98a2;">0</div>
<div class="t" style="left:235.70px;top:235.00px;font-size:11px;color:#4a5561;font-weight:bold;text-decoration:underline;text-decoration-color:#8d98a2;">0</div>
<div class="t" style="left:318.30px;top:235.00px;font-size:11px;color:#4a5561;font-weight:bold;transform:scaleX(1.0700);transform-origin:0 0;text-decoration:underline;text-decoration-color:#8d98a2;">4500</div>
<div class="t" style="left:400.90px;top:235.00px;font-size:11px;color:#4a5561;font-weight:bold;transform:scaleX(1.0700);transform-origin:0 0;text-decoration:underline;text-decoration-color:#8d98a2;">4500</div>
<div class="t" style="left:483.50px;top:235.00px;font-size:11px;color:#4a5561;font-weight:bold;transform:scaleX(1.0700);transform-origin:0 0;text-decoration:underline;text-decoration-color:#8d98a2;">4500</div>
<div class="t" style="left:566.10px;top:235.00px;font-size:11px;color:#4a5561;font-weight:bold;transform:scaleX(1.0700);transform-origin:0 0;text-decoration:underline;text-decoration-color:#8d98a2;">4500</div>
<div class="t" style="left:648.70px;top:235.00px;font-size:11px;color:#4a5561;font-weight:bold;transform:scaleX(1.0700);transform-origin:0 0;text-decoration:underline;text-decoration-color:#8d98a2;">4500</div>
<div class="t" style="left:731.30px;top:235.00px;font-size:11px;color:#4a5561;font-weight:bold;transform:scaleX(1.0700);transform-origin:0 0;text-decoration:underline;text-decoration-color:#8d98a2;">4500</div>
<div class="t" style="left:813.90px;top:235.00px;font-size:11px;color:#4a5561;font-weight:bold;transform:scaleX(1.0700);transform-origin:0 0;text-decoration:underline;text-decoration-color:#8d98a2;">4500</div>
<div class="t" style="left:896.50px;top:235.00px;font-size:11px;color:#4a5561;font-weight:bold;text-decoration:underline;text-decoration-color:#8d98a2;">0</div>
<div class="t" style="left:979.10px;top:235.00px;font-size:11px;color:#4a5561;font-weight:bold;text-decoration:underline;text-decoration-color:#8d98a2;">0</div>
<div class="t" style="left:1061.70px;top:235.00px;font-size:11px;color:#4a5561;font-weight:bold;text-decoration:underline;text-decoration-color:#8d98a2;">0</div>
<div class="t" style="left:1144.30px;top:235.00px;font-size:11px;color:#4a5561;font-weight:bold;text-decoration:underline;text-decoration-color:#8d98a2;">0</div>
<div class="a" style="left:0px;top:296px;width:1220px;height:1px;background:#c9c9c9;"></div>
<svg class="a" style="left:2px;top:272px" width="17" height="17" viewBox="0 0 17 17"><circle cx="8.5" cy="8.3" r="7.5" fill="#fff" stroke="#3a3a3a" stroke-width="1.05"/><path d="M5.4 7l3.1 3 3.1-3" fill="none" stroke="#333" stroke-width="1.6"/></svg>
<div class="t" style="left:23.60px;top:275.00px;font-size:11px;color:#111;font-weight:bold;text-decoration:underline;text-decoration-color:#6a6a6a;-webkit-text-stroke:0.25px #111;">Jowl</div>
<div class="t" style="left:153.10px;top:268.00px;font-size:11px;color:#4a5561;font-weight:bold;text-decoration:underline;text-decoration-color:#8d98a2;">0</div>
<div class="t" style="left:235.70px;top:268.00px;font-size:11px;color:#4a5561;font-weight:bold;text-decoration:underline;text-decoration-color:#8d98a2;">0</div>
<div class="t" style="left:318.30px;top:268.00px;font-size:11px;color:#4a5561;font-weight:bold;transform:scaleX(1.0700);transform-origin:0 0;text-decoration:underline;text-decoration-color:#8d98a2;">270</div>
<div class="t" style="left:400.90px;top:268.00px;font-size:11px;color:#4a5561;font-weight:bold;transform:scaleX(1.0700);transform-origin:0 0;text-decoration:underline;text-decoration-color:#8d98a2;">269</div>
<div class="t" style="left:483.50px;top:268.00px;font-size:11px;color:#4a5561;font-weight:bold;transform:scaleX(1.0700);transform-origin:0 0;text-decoration:underline;text-decoration-color:#8d98a2;">270</div>
<div class="t" style="left:566.10px;top:268.00px;font-size:11px;color:#4a5561;font-weight:bold;transform:scaleX(1.0700);transform-origin:0 0;text-decoration:underline;text-decoration-color:#8d98a2;">269</div>
<div class="t" style="left:648.70px;top:268.00px;font-size:11px;color:#4a5561;font-weight:bold;transform:scaleX(1.0700);transform-origin:0 0;text-decoration:underline;text-decoration-color:#8d98a2;">270</div>
<div class="t" style="left:731.30px;top:268.00px;font-size:11px;color:#4a5561;font-weight:bold;transform:scaleX(1.0700);transform-origin:0 0;text-decoration:underline;text-decoration-color:#8d98a2;">269</div>
<div class="t" style="left:813.90px;top:268.00px;font-size:11px;color:#4a5561;font-weight:bold;transform:scaleX(1.0700);transform-origin:0 0;text-decoration:underline;text-decoration-color:#8d98a2;">270</div>
<div class="t" style="left:896.50px;top:268.00px;font-size:11px;color:#4a5561;font-weight:bold;text-decoration:underline;text-decoration-color:#8d98a2;">0</div>
<div class="t" style="left:979.10px;top:268.00px;font-size:11px;color:#4a5561;font-weight:bold;text-decoration:underline;text-decoration-color:#8d98a2;">0</div>
<div class="t" style="left:1061.70px;top:268.00px;font-size:11px;color:#4a5561;font-weight:bold;text-decoration:underline;text-decoration-color:#8d98a2;">0</div>
<div class="t" style="left:1144.30px;top:268.00px;font-size:11px;color:#4a5561;font-weight:bold;text-decoration:underline;text-decoration-color:#8d98a2;">0</div>
<div class="a" style="left:0px;top:329px;width:1220px;height:1px;background:#c9c9c9;"></div>
<svg class="a" style="left:2px;top:305px" width="17" height="17" viewBox="0 0 17 17"><circle cx="8.5" cy="8.3" r="7.5" fill="#fff" stroke="#3a3a3a" stroke-width="1.05"/><path d="M5.4 7l3.1 3 3.1-3" fill="none" stroke="#333" stroke-width="1.6"/></svg>
<div class="t" style="left:23.60px;top:308.00px;font-size:11px;color:#111;font-weight:bold;text-decoration:underline;text-decoration-color:#6a6a6a;-webkit-text-stroke:0.25px #111;">Loin</div>
<div class="t" style="left:153.10px;top:301.00px;font-size:11px;color:#4a5561;font-weight:bold;text-decoration:underline;text-decoration-color:#8d98a2;">0</div>
<div class="t" style="left:235.70px;top:301.00px;font-size:11px;color:#4a5561;font-weight:bold;text-decoration:underline;text-decoration-color:#8d98a2;">0</div>
<div class="t" style="left:318.30px;top:301.00px;font-size:11px;color:#4a5561;font-weight:bold;transform:scaleX(1.0700);transform-origin:0 0;text-decoration:underline;text-decoration-color:#8d98a2;">33</div>
<div class="t" style="left:400.90px;top:301.00px;font-size:11px;color:#4a5561;font-weight:bold;transform:scaleX(1.0700);transform-origin:0 0;text-decoration:underline;text-decoration-color:#8d98a2;">213</div>
<div class="t" style="left:483.50px;top:301.00px;font-size:11px;color:#4a5561;font-weight:bold;transform:scaleX(1.0700);transform-origin:0 0;text-decoration:underline;text-decoration-color:#8d98a2;">10</div>
<div class="t" style="left:566.10px;top:301.00px;font-size:11px;color:#4a5561;font-weight:bold;text-decoration:underline;text-decoration-color:#8d98a2;">4</div>
<div class="t" style="left:648.70px;top:301.00px;font-size:11px;color:#4a5561;font-weight:bold;transform:scaleX(1.0700);transform-origin:0 0;text-decoration:underline;text-decoration-color:#8d98a2;">10</div>
<div class="t" style="left:731.30px;top:301.00px;font-size:11px;color:#4a5561;font-weight:bold;text-decoration:underline;text-decoration-color:#8d98a2;">4</div>
<div class="t" style="left:813.90px;top:301.00px;font-size:11px;color:#4a5561;font-weight:bold;transform:scaleX(1.0700);transform-origin:0 0;text-decoration:underline;text-decoration-color:#8d98a2;">12</div>
<div class="t" style="left:896.50px;top:301.00px;font-size:11px;color:#111;font-weight:bold;transform:scaleX(1.0700);transform-origin:0 0;text-decoration:underline;">-5259</div>
<div class="t" style="left:979.10px;top:301.00px;font-size:11px;color:#4a5561;font-weight:bold;transform:scaleX(1.0700);transform-origin:0 0;text-decoration:underline;text-decoration-color:#8d98a2;">34</div>
<div class="t" style="left:1061.70px;top:301.00px;font-size:11px;color:#111;font-weight:bold;transform:scaleX(1.0700);transform-origin:0 0;text-decoration:underline;">-23451</div>
<div class="t" style="left:1144.30px;top:301.00px;font-size:11px;color:#4a5561;font-weight:bold;text-decoration:underline;text-decoration-color:#8d98a2;">0</div>
<div class="a" style="left:0px;top:362px;width:1220px;height:1px;background:#c9c9c9;"></div>
<svg class="a" style="left:2px;top:338px" width="17" height="17" viewBox="0 0 17 17"><circle cx="8.5" cy="8.3" r="7.5" fill="#fff" stroke="#3a3a3a" stroke-width="1.05"/><path d="M5.4 7l3.1 3 3.1-3" fill="none" stroke="#333" stroke-width="1.6"/></svg>
<div class="t" style="left:23.60px;top:341.00px;font-size:11px;color:#111;font-weight:bold;text-decoration:underline;text-decoration-color:#6a6a6a;-webkit-text-stroke:0.25px #111;">Loin S/E</div>
<div class="t" style="left:153.10px;top:334.00px;font-size:11px;color:#4a5561;font-weight:bold;text-decoration:underline;text-decoration-color:#8d98a2;">0</div>
<div class="t" style="left:235.70px;top:334.00px;font-size:11px;color:#4a5561;font-weight:bold;text-decoration:underline;text-decoration-color:#8d98a2;">0</div>
<div class="t" style="left:318.30px;top:334.00px;font-size:11px;color:#4a5561;font-weight:bold;text-decoration:underline;text-decoration-color:#8d98a2;">0</div>
<div class="t" style="left:400.90px;top:334.00px;font-size:11px;color:#4a5561;font-weight:bold;text-decoration:underline;text-decoration-color:#8d98a2;">0</div>
<div class="t" style="left:483.50px;top:334.00px;font-size:11px;color:#4a5561;font-weight:bold;text-decoration:underline;text-decoration-color:#8d98a2;">0</div>
<div class="t" style="left:566.10px;top:334.00px;font-size:11px;color:#4a5561;font-weight:bold;text-decoration:underline;text-decoration-color:#8d98a2;">0</div>
<div class="t" style="left:648.70px;top:334.00px;font-size:11px;color:#4a5561;font-weight:bold;text-decoration:underline;text-decoration-color:#8d98a2;">0</div>
<div class="t" style="left:731.30px;top:334.00px;font-size:11px;color:#4a5561;font-weight:bold;text-decoration:underline;text-decoration-color:#8d98a2;">0</div>
<div class="t" style="left:813.90px;top:334.00px;font-size:11px;color:#4a5561;font-weight:bold;text-decoration:underline;text-decoration-color:#8d98a2;">0</div>
<div class="t" style="left:896.50px;top:334.00px;font-size:11px;color:#4a5561;font-weight:bold;text-decoration:underline;text-decoration-color:#8d98a2;">0</div>
<div class="t" style="left:979.10px;top:334.00px;font-size:11px;color:#4a5561;font-weight:bold;text-decoration:underline;text-decoration-color:#8d98a2;">0</div>
<div class="t" style="left:1061.70px;top:334.00px;font-size:11px;color:#4a5561;font-weight:bold;text-decoration:underline;text-decoration-color:#8d98a2;">0</div>
<div class="t" style="left:1144.30px;top:334.00px;font-size:11px;color:#4a5561;font-weight:bold;text-decoration:underline;text-decoration-color:#8d98a2;">0</div>
<div class="a" style="left:0px;top:395px;width:1220px;height:1px;background:#c9c9c9;"></div>
<svg class="a" style="left:2px;top:371px" width="17" height="17" viewBox="0 0 17 17"><circle cx="8.5" cy="8.3" r="7.5" fill="#fff" stroke="#3a3a3a" stroke-width="1.05"/><path d="M5.4 7l3.1 3 3.1-3" fill="none" stroke="#333" stroke-width="1.6"/></svg>
<div class="t" style="left:23.60px;top:374.00px;font-size:11px;color:#111;font-weight:bold;text-decoration:underline;text-decoration-color:#6a6a6a;-webkit-text-stroke:0.25px #111;">Middle</div>
<div class="t" style="left:153.10px;top:367.00px;font-size:11px;color:#4a5561;font-weight:bold;text-decoration:underline;text-decoration-color:#8d98a2;">0</div>
<div class="t" style="left:235.70px;top:367.00px;font-size:11px;color:#4a5561;font-weight:bold;text-decoration:underline;text-decoration-color:#8d98a2;">0</div>
<div class="t" style="left:318.30px;top:367.00px;font-size:11px;color:#4a5561;font-weight:bold;text-decoration:underline;text-decoration-color:#8d98a2;">0</div>
<div class="t" style="left:400.90px;top:367.00px;font-size:11px;color:#4a5561;font-weight:bold;text-decoration:underline;text-decoration-color:#8d98a2;">0</div>
<div class="t" style="left:483.50px;top:367.00px;font-size:11px;color:#4a5561;font-weight:bold;text-decoration:underline;text-decoration-color:#8d98a2;">0</div>
<div class="t" style="left:566.10px;top:367.00px;font-size:11px;color:#4a5561;font-weight:bold;text-decoration:underline;text-decoration-color:#8d98a2;">0</div>
<div class="t" style="left:648.70px;top:367.00px;font-size:11px;color:#4a5561;font-weight:bold;text-decoration:underline;text-decoration-color:#8d98a2;">0</div>
<div class="t" style="left:731.30px;top:367.00px;font-size:11px;color:#4a5561;font-weight:bold;text-decoration:underline;text-decoration-color:#8d98a2;">0</div>
<div class="t" style="left:813.90px;top:367.00px;font-size:11px;color:#4a5561;font-weight:bold;text-decoration:underline;text-decoration-color:#8d98a2;">0</div>
<div class="t" style="left:896.50px;top:367.00px;font-size:11px;color:#4a5561;font-weight:bold;text-decoration:underline;text-decoration-color:#8d98a2;">0</div>
<div class="t" style="left:979.10px;top:367.00px;font-size:11px;color:#4a5561;font-weight:bold;text-decoration:underline;text-decoration-color:#8d98a2;">0</div>
<div class="t" style="left:1061.70px;top:367.00px;font-size:11px;color:#4a5561;font-weight:bold;text-decoration:underline;text-decoration-color:#8d98a2;">0</div>
<div class="t" style="left:1144.30px;top:367.00px;font-size:11px;color:#4a5561;font-weight:bold;text-decoration:underline;text-decoration-color:#8d98a2;">0</div>
<div class="a" style="left:0px;top:428px;width:1220px;height:1px;background:#c9c9c9;"></div>
<svg class="a" style="left:2px;top:404px" width="17" height="17" viewBox="0 0 17 17"><circle cx="8.5" cy="8.3" r="7.5" fill="#fff" stroke="#3a3a3a" stroke-width="1.05"/><path d="M5.4 7l3.1 3 3.1-3" fill="none" stroke="#333" stroke-width="1.6"/></svg>
<div class="t" style="left:23.60px;top:407.00px;font-size:11px;color:#111;font-weight:bold;text-decoration:underline;text-decoration-color:#6a6a6a;-webkit-text-stroke:0.25px #111;">Shoulder</div>
<div class="t" style="left:153.10px;top:400.00px;font-size:11px;color:#4a5561;font-weight:bold;text-decoration:underline;text-decoration-color:#8d98a2;">0</div>
<div class="t" style="left:235.70px;top:400.00px;font-size:11px;color:#4a5561;font-weight:bold;text-decoration:underline;text-decoration-color:#8d98a2;">0</div>
<div class="t" style="left:318.30px;top:400.00px;font-size:11px;color:#4a5561;font-weight:bold;transform:scaleX(1.0700);transform-origin:0 0;text-decoration:underline;text-decoration-color:#8d98a2;">28</div>
<div class="t" style="left:400.90px;top:400.00px;font-size:11px;color:#111;font-weight:bold;transform:scaleX(1.0700);transform-origin:0 0;text-decoration:underline;">-1392</div>
<div class="t" style="left:483.50px;top:400.00px;font-size:11px;color:#4a5561;font-weight:bold;transform:scaleX(1.0700);transform-origin:0 0;text-decoration:underline;text-decoration-color:#8d98a2;">28</div>
<div class="t" style="left:566.10px;top:400.00px;font-size:11px;color:#4a5561;font-weight:bold;text-decoration:underline;text-decoration-color:#8d98a2;">0</div>
<div class="t" style="left:648.70px;top:400.00px;font-size:11px;color:#4a5561;font-weight:bold;text-decoration:underline;text-decoration-color:#8d98a2;">2</div>
<div class="t" style="left:731.30px;top:400.00px;font-size:11px;color:#4a5561;font-weight:bold;text-decoration:underline;text-decoration-color:#8d98a2;">0</div>
<div class="t" style="left:813.90px;top:400.00px;font-size:11px;color:#4a5561;font-weight:bold;text-decoration:underline;text-decoration-color:#8d98a2;">2</div>
<div class="a" style="left:802.4px;top:401px;width:4px;height:4px;border-radius:50%;background:#f4f000;border:0.8px solid #86862a"></div>
<div class="t" style="left:896.50px;top:400.00px;font-size:11px;color:#4a5561;font-weight:bold;transform:scaleX(1.0700);transform-origin:0 0;text-decoration:underline;text-decoration-color:#8d98a2;">4227</div>
<div class="t" style="left:979.10px;top:400.00px;font-size:11px;color:#4a5561;font-weight:bold;text-decoration:underline;text-decoration-color:#8d98a2;">2</div>
<div class="a" style="left:967.6px;top:401px;width:4px;height:4px;border-radius:50%;background:#f4f000;border:0.8px solid #86862a"></div>
<div class="t" style="left:1061.70px;top:400.00px;font-size:11px;color:#111;font-weight:bold;transform:scaleX(1.0700);transform-origin:0 0;text-decoration:underline;">-26395</div>
<div class="t" style="left:1144.30px;top:400.00px;font-size:11px;color:#4a5561;font-weight:bold;text-decoration:underline;text-decoration-color:#8d98a2;">0</div>
</div>
<div class="a" style="left:6px;top:648px;width:1220px;height:14px;background:#f0f0f0;"></div>
<div class="a" style="left:20px;top:648px;width:1135px;height:14px;background:#cdcdcd;"></div>
<svg class="a" style="left:9px;top:651px" width="6" height="8"><path d="M4.5 1L1.5 4l3 3" fill="none" stroke="#a0a0a0" stroke-width="1"/></svg>
<svg class="a" style="left:1216px;top:651px" width="6" height="8"><path d="M1.5 1l3 3-3 3" fill="none" stroke="#a0a0a0" stroke-width="1"/></svg>
<div class="a" style="left:1226px;top:178px;width:14px;height:469px;background:#f0f0f0;"></div>
<div class="a" style="left:1226px;top:229px;width:13px;height:328px;background:#cdcdcd;"></div>
<svg class="a" style="left:1229px;top:219px" width="8" height="6"><path d="M1 4.5l3-3 3 3" fill="none" stroke="#a0a0a0" stroke-width="1"/></svg>
<svg class="a" style="left:1229px;top:637px" width="8" height="6"><path d="M1 1.5l3 3 3-3" fill="none" stroke="#a0a0a0" stroke-width="1"/></svg>
<div class="a" style="left:5px;top:667px;width:1236px;height:38px;border:1px solid #c6c6c6;border-radius:4px 4px 0 0;box-sizing:border-box;background:#fff;"></div>
<div class="t" style="left:14.40px;top:675.00px;font-size:11px;color:#8a8a8a;font-weight:bold;transform:scaleX(1.0271);transform-origin:0 0;">Available</div>
<div class="t" style="left:88.90px;top:675.00px;font-size:11px;color:#111;font-weight:bold;transform:scaleX(0.9896);transform-origin:0 0;">Oversold</div>
<div class="a" style="left:163.5px;top:676.8px;width:4px;height:4px;border-radius:50%;background:#f4f000;border:0.6px solid #b8b040"></div>
<div class="t" style="left:168.50px;top:675.00px;font-size:11px;color:#333;transform:scaleX(1.0610);transform-origin:0 0;">Warning</div>
<div class="a" style="left:238.3px;top:676.8px;width:4px;height:4px;border-radius:50%;background:#f39c12;border:0.6px solid #c08030"></div>
<div class="t" style="left:243.50px;top:675.00px;font-size:11px;color:#333;transform:scaleX(1.1061);transform-origin:0 0;">Urgent</div>
<div class="a" style="left:0px;top:689px;width:1249px;height:5px;background:#f7f8fa;"></div>
<div class="a" style="left:0px;top:694px;width:1249px;height:8px;background:#dcdde0;"></div>
<div class="a" style="left:0px;top:702px;width:1249px;height:3px;background:#fafafa;"></div>
<div class="a" style="left:825px;top:164px;width:283px;height:331px;border:1px solid #b4b4b4;box-sizing:border-box;background:#fff;"></div>
<div class="a" style="left:828px;top:167px;width:24px;height:325px;background:#f0f0f0;"></div>
<svg class="a" style="left:831px;top:169px" width="14" height="14" viewBox="0 0 14 14"><path d="M0 1.6L7 0v13L0 11.4z" fill="#2b3339"/><path d="M1.9 4.3l3.2 4.6M5.1 4.3L1.9 8.9" stroke="#fff" stroke-width="1.3"/><path d="M8 2.6h5M8 4.5h5M8 6.4h5M8 8.3h5M8 10.2h5" stroke="#2b3339" stroke-width="1.05"/><path d="M12.6 2v8.8" stroke="#2b3339" stroke-width="0.8"/></svg>
<div class="t" style="left:857.40px;top:171.00px;font-size:11px;color:#262626;font-weight:bold;transform:scaleX(0.8336);transform-origin:0 0;">Sales Pipeline Report</div>
<svg class="a" style="left:831px;top:187px" width="14" height="14" viewBox="0 0 14 14"><path d="M0 1.6L7 0v13L0 11.4z" fill="#2b3339"/><path d="M1.9 4.3l3.2 4.6M5.1 4.3L1.9 8.9" stroke="#fff" stroke-width="1.3"/><path d="M8 2.6h5M8 4.5h5M8 6.4h5M8 8.3h5M8 10.2h5" stroke="#2b3339" stroke-width="1.05"/><path d="M12.6 2v8.8" stroke="#2b3339" stroke-width="0.8"/></svg>
<div class="t" style="left:857.40px;top:189.00px;font-size:11px;color:#262626;font-weight:bold;transform:scaleX(0.8369);transform-origin:0 0;">Chilled Pallet Forecast Report</div>
<svg class="a" style="left:831px;top:205px" width="14" height="14" viewBox="0 0 14 14"><path d="M0 1.6L7 0v13L0 11.4z" fill="#2b3339"/><path d="M1.9 4.3l3.2 4.6M5.1 4.3L1.9 8.9" stroke="#fff" stroke-width="1.3"/><path d="M8 2.6h5M8 4.5h5M8 6.4h5M8 8.3h5M8 10.2h5" stroke="#2b3339" stroke-width="1.05"/><path d="M12.6 2v8.8" stroke="#2b3339" stroke-width="0.8"/></svg>
<div class="t" style="left:857.40px;top:207.00px;font-size:11px;color:#262626;font-weight:bold;transform:scaleX(0.8557);transform-origin:0 0;">Chilled Container Summary Report</div>
<svg class="a" style="left:831px;top:222px" width="14" height="14" viewBox="0 0 14 14"><path d="M2 0h7l3.5 3.5V14H2z" fill="#2b3339"/><path d="M9 0v3.5h3.5" fill="#fff" opacity=".5"/><rect x="4" y="7" width="6.5" height="1.3" fill="#fff"/><rect x="4" y="9.6" width="6.5" height="1.3" fill="#fff"/></svg>
<div class="t" style="left:857.40px;top:225.00px;font-size:11px;color:#262626;font-weight:bold;transform:scaleX(0.8496);transform-origin:0 0;">Order Loading Plan Report</div>
<svg class="a" style="left:831px;top:241px" width="14" height="14" viewBox="0 0 14 14"><path d="M0 1.6L7 0v13L0 11.4z" fill="#2b3339"/><path d="M1.9 4.3l3.2 4.6M5.1 4.3L1.9 8.9" stroke="#fff" stroke-width="1.3"/><path d="M8 2.6h5M8 4.5h5M8 6.4h5M8 8.3h5M8 10.2h5" stroke="#2b3339" stroke-width="1.05"/><path d="M12.6 2v8.8" stroke="#2b3339" stroke-width="0.8"/></svg>
<div class="t" style="left:857.40px;top:243.00px;font-size:11px;color:#262626;font-weight:bold;transform:scaleX(0.8695);transform-origin:0 0;">Program Hog Utilization Report</div>
<svg class="a" style="left:831px;top:259px" width="14" height="14" viewBox="0 0 14 14"><path d="M0 1.6L7 0v13L0 11.4z" fill="#2b3339"/><path d="M1.9 4.3l3.2 4.6M5.1 4.3L1.9 8.9" stroke="#fff" stroke-width="1.3"/><path d="M8 2.6h5M8 4.5h5M8 6.4h5M8 8.3h5M8 10.2h5" stroke="#2b3339" stroke-width="1.05"/><path d="M12.6 2v8.8" stroke="#2b3339" stroke-width="0.8"/></svg>
<div class="t" style="left:857.40px;top:261.00px;font-size:11px;color:#262626;font-weight:bold;transform:scaleX(0.8620);transform-origin:0 0;">Detailed Availability Report</div>
<svg class="a" style="left:831px;top:278px" width="14" height="14" viewBox="0 0 14 14"><path d="M0 1.6L7 0v13L0 11.4z" fill="#2b3339"/><path d="M1.9 4.3l3.2 4.6M5.1 4.3L1.9 8.9" stroke="#fff" stroke-width="1.3"/><path d="M8 2.6h5M8 4.5h5M8 6.4h5M8 8.3h5M8 10.2h5" stroke="#2b3339" stroke-width="1.05"/><path d="M12.6 2v8.8" stroke="#2b3339" stroke-width="0.8"/></svg>
<div class="t" style="left:857.40px;top:280.00px;font-size:11px;color:#262626;font-weight:bold;transform:scaleX(0.8578);transform-origin:0 0;">Container Completion Report</div>
<svg class="a" style="left:831px;top:296px" width="14" height="14" viewBox="0 0 14 14"><path d="M0 1.6L7 0v13L0 11.4z" fill="#2b3339"/><path d="M1.9 4.3l3.2 4.6M5.1 4.3L1.9 8.9" stroke="#fff" stroke-width="1.3"/><path d="M8 2.6h5M8 4.5h5M8 6.4h5M8 8.3h5M8 10.2h5" stroke="#2b3339" stroke-width="1.05"/><path d="M12.6 2v8.8" stroke="#2b3339" stroke-width="0.8"/></svg>
<div class="t" style="left:857.40px;top:298.00px;font-size:11px;color:#262626;font-weight:bold;transform:scaleX(0.8642);transform-origin:0 0;">Export Demand</div>
<svg class="a" style="left:831px;top:314px" width="14" height="14" viewBox="0 0 14 14"><path d="M0 1.6L7 0v13L0 11.4z" fill="#2b3339"/><path d="M1.9 4.3l3.2 4.6M5.1 4.3L1.9 8.9" stroke="#fff" stroke-width="1.3"/><path d="M8 2.6h5M8 4.5h5M8 6.4h5M8 8.3h5M8 10.2h5" stroke="#2b3339" stroke-width="1.05"/><path d="M12.6 2v8.8" stroke="#2b3339" stroke-width="0.8"/></svg>
<div class="t" style="left:857.40px;top:316.00px;font-size:11px;color:#262626;font-weight:bold;transform:scaleX(0.8527);transform-origin:0 0;">Fresh Order Completion Report</div>
<svg class="a" style="left:831px;top:332px" width="14" height="14" viewBox="0 0 14 14"><path d="M0 1.6L7 0v13L0 11.4z" fill="#2b3339"/><path d="M1.9 4.3l3.2 4.6M5.1 4.3L1.9 8.9" stroke="#fff" stroke-width="1.3"/><path d="M8 2.6h5M8 4.5h5M8 6.4h5M8 8.3h5M8 10.2h5" stroke="#2b3339" stroke-width="1.05"/><path d="M12.6 2v8.8" stroke="#2b3339" stroke-width="0.8"/></svg>
<div class="t" style="left:857.40px;top:334.00px;font-size:11px;color:#262626;font-weight:bold;transform:scaleX(0.8415);transform-origin:0 0;">Packaging Consumption Forecast Report</div>
<svg class="a" style="left:831px;top:350px" width="14" height="14" viewBox="0 0 14 14"><path d="M0 1.6L7 0v13L0 11.4z" fill="#2b3339"/><path d="M1.9 4.3l3.2 4.6M5.1 4.3L1.9 8.9" stroke="#fff" stroke-width="1.3"/><path d="M8 2.6h5M8 4.5h5M8 6.4h5M8 8.3h5M8 10.2h5" stroke="#2b3339" stroke-width="1.05"/><path d="M12.6 2v8.8" stroke="#2b3339" stroke-width="0.8"/></svg>
<div class="t" style="left:857.40px;top:352.00px;font-size:11px;color:#262626;font-weight:bold;transform:scaleX(0.8454);transform-origin:0 0;">Production Conversion Labor Report</div>
<svg class="a" style="left:831px;top:368px" width="14" height="14" viewBox="0 0 14 14"><path d="M0 1.6L7 0v13L0 11.4z" fill="#2b3339"/><path d="M1.9 4.3l3.2 4.6M5.1 4.3L1.9 8.9" stroke="#fff" stroke-width="1.3"/><path d="M8 2.6h5M8 4.5h5M8 6.4h5M8 8.3h5M8 10.2h5" stroke="#2b3339" stroke-width="1.05"/><path d="M12.6 2v8.8" stroke="#2b3339" stroke-width="0.8"/></svg>
<div class="t" style="left:857.40px;top:370.00px;font-size:11px;color:#262626;font-weight:bold;transform:scaleX(0.8667);transform-origin:0 0;">Labor Opportunity Report</div>
<svg class="a" style="left:831px;top:387px" width="14" height="14" viewBox="0 0 14 14"><path d="M0 1.6L7 0v13L0 11.4z" fill="#2b3339"/><path d="M1.9 4.3l3.2 4.6M5.1 4.3L1.9 8.9" stroke="#fff" stroke-width="1.3"/><path d="M8 2.6h5M8 4.5h5M8 6.4h5M8 8.3h5M8 10.2h5" stroke="#2b3339" stroke-width="1.05"/><path d="M12.6 2v8.8" stroke="#2b3339" stroke-width="0.8"/></svg>
<div class="t" style="left:857.40px;top:389.00px;font-size:11px;color:#262626;font-weight:bold;transform:scaleX(0.8494);transform-origin:0 0;">Chilled Demand Changes Report</div>
<svg class="a" style="left:831px;top:405px" width="14" height="14" viewBox="0 0 14 14"><path d="M0 1.6L7 0v13L0 11.4z" fill="#2b3339"/><path d="M1.9 4.3l3.2 4.6M5.1 4.3L1.9 8.9" stroke="#fff" stroke-width="1.3"/><path d="M8 2.6h5M8 4.5h5M8 6.4h5M8 8.3h5M8 10.2h5" stroke="#2b3339" stroke-width="1.05"/><path d="M12.6 2v8.8" stroke="#2b3339" stroke-width="0.8"/></svg>
<div class="t" style="left:857.40px;top:407.00px;font-size:11px;color:#262626;font-weight:bold;transform:scaleX(0.8534);transform-origin:0 0;">Hog Supply Variance Report</div>
<svg class="a" style="left:831px;top:423px" width="14" height="14" viewBox="0 0 14 14"><path d="M0 1.6L7 0v13L0 11.4z" fill="#2b3339"/><path d="M1.9 4.3l3.2 4.6M5.1 4.3L1.9 8.9" stroke="#fff" stroke-width="1.3"/><path d="M8 2.6h5M8 4.5h5M8 6.4h5M8 8.3h5M8 10.2h5" stroke="#2b3339" stroke-width="1.05"/><path d="M12.6 2v8.8" stroke="#2b3339" stroke-width="0.8"/></svg>
<div class="t" style="left:857.40px;top:425.00px;font-size:11px;color:#262626;font-weight:bold;transform:scaleX(0.8620);transform-origin:0 0;">Credit Demand and Availability Report</div>
<svg class="a" style="left:831px;top:441px" width="14" height="14" viewBox="0 0 14 14"><path d="M0 1.6L7 0v13L0 11.4z" fill="#2b3339"/><path d="M1.9 4.3l3.2 4.6M5.1 4.3L1.9 8.9" stroke="#fff" stroke-width="1.3"/><path d="M8 2.6h5M8 4.5h5M8 6.4h5M8 8.3h5M8 10.2h5" stroke="#2b3339" stroke-width="1.05"/><path d="M12.6 2v8.8" stroke="#2b3339" stroke-width="0.8"/></svg>
<div class="t" style="left:857.40px;top:443.00px;font-size:11px;color:#262626;font-weight:bold;transform:scaleX(0.8493);transform-origin:0 0;">Transformation KPI Report</div>
<svg class="a" style="left:831px;top:459px" width="14" height="14" viewBox="0 0 14 14"><path d="M0 1.6L7 0v13L0 11.4z" fill="#2b3339"/><path d="M1.9 4.3l3.2 4.6M5.1 4.3L1.9 8.9" stroke="#fff" stroke-width="1.3"/><path d="M8 2.6h5M8 4.5h5M8 6.4h5M8 8.3h5M8 10.2h5" stroke="#2b3339" stroke-width="1.05"/><path d="M12.6 2v8.8" stroke="#2b3339" stroke-width="0.8"/></svg>
<div class="t" style="left:857.40px;top:461.00px;font-size:11px;color:#262626;font-weight:bold;transform:scaleX(0.8594);transform-origin:0 0;">Production Order Planned Adjustment Report</div>
<svg class="a" style="left:831px;top:477px" width="14" height="14" viewBox="0 0 14 14"><path d="M0 1.6L7 0v13L0 11.4z" fill="#2b3339"/><path d="M1.9 4.3l3.2 4.6M5.1 4.3L1.9 8.9" stroke="#fff" stroke-width="1.3"/><path d="M8 2.6h5M8 4.5h5M8 6.4h5M8 8.3h5M8 10.2h5" stroke="#2b3339" stroke-width="1.05"/><path d="M12.6 2v8.8" stroke="#2b3339" stroke-width="0.8"/></svg>
<div class="t" style="left:857.40px;top:479.00px;font-size:11px;color:#262626;font-weight:bold;transform:scaleX(0.8463);transform-origin:0 0;">WIP Forecast Report</div>
<div class="a" style="left:818px;top:157px;width:298px;height:346px;border:3px solid #fd3a08;box-sizing:border-box;"></div>
<div class="a" style="left:1246.3px;top:1px;width:1.6px;height:4px;border-radius:1px;background:#6a6a6a;opacity:.75"></div>
<div class="a" style="left:1246.3px;top:81px;width:1.6px;height:4px;border-radius:1px;background:#6a6a6a;opacity:.75"></div>
<div class="a" style="left:1246.3px;top:160px;width:1.6px;height:4px;border-radius:1px;background:#6a6a6a;opacity:.75"></div>
<div class="a" style="left:1246.3px;top:239px;width:1.6px;height:4px;border-radius:1px;background:#6a6a6a;opacity:.75"></div>
<div class="a" style="left:1246.3px;top:319px;width:1.6px;height:4px;border-radius:1px;background:#6a6a6a;opacity:.75"></div>
<div class="a" style="left:1246.3px;top:397px;width:1.6px;height:4px;border-radius:1px;background:#6a6a6a;opacity:.75"></div>
<div class="a" style="left:1246.3px;top:476px;width:1.6px;height:4px;border-radius:1px;background:#6a6a6a;opacity:.75"></div>
<div class="a" style="left:1246.3px;top:556px;width:1.6px;height:4px;border-radius:1px;background:#6a6a6a;opacity:.75"></div>
<div class="a" style="left:1246.3px;top:633px;width:1.6px;height:4px;border-radius:1px;background:#6a6a6a;opacity:.75"></div>
</body></html>
